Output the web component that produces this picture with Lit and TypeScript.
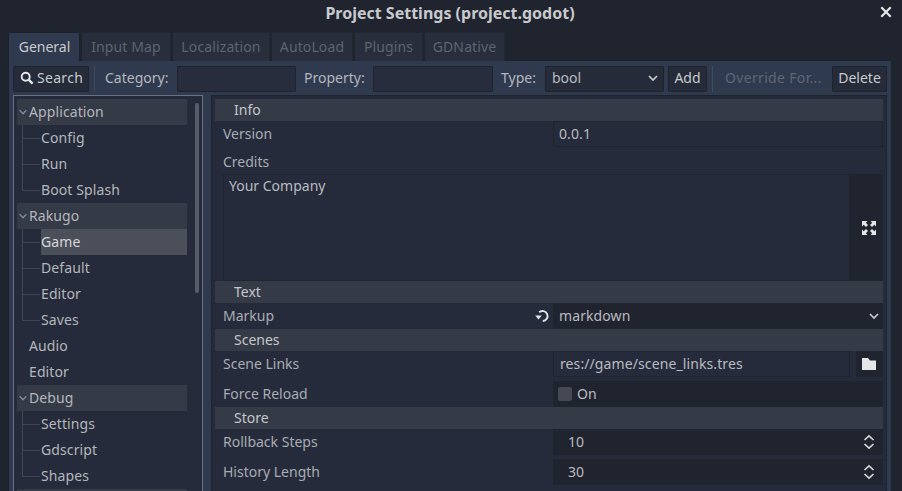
import { LitElement, html, css, svg } from 'lit';
import { customElement } from 'lit/decorators.js';

const chevron = (size = 12) => html`<svg class="chev" width=${size} height=${size} viewBox="0 0 12 12"><path d="M2 4l4 4 4-4" fill="none" stroke="currentColor" stroke-width="1.7"/></svg>`;
const updown = html`<svg class="updown" width="12" height="16" viewBox="0 0 12 16"><path d="M1.5 6L6 1.8 10.5 6M1.5 10L6 14.2 10.5 10" fill="none" stroke="#d8d9dc" stroke-width="1.6"/></svg>`;

type TreeRow = { label: string; kind: 'head' | 'plain' | 'child' | 'last'; selected?: boolean };

const tree: TreeRow[] = [
  { label: 'Application', kind: 'head' },
  { label: 'Config', kind: 'child' },
  { label: 'Run', kind: 'child' },
  { label: 'Boot Splash', kind: 'last' },
  { label: 'Rakugo', kind: 'head' },
  { label: 'Game', kind: 'child', selected: true },
  { label: 'Default', kind: 'child' },
  { label: 'Editor', kind: 'child' },
  { label: 'Saves', kind: 'last' },
  { label: 'Audio', kind: 'plain' },
  { label: 'Editor', kind: 'plain' },
  { label: 'Debug', kind: 'head' },
  { label: 'Settings', kind: 'child' },
  { label: 'Gdscript', kind: 'child' },
  { label: 'Shapes', kind: 'last' },
  { label: '', kind: 'head' },
];

const tabs = ['General', 'Input Map', 'Localization', 'AutoLoad', 'Plugins', 'GDNative'];

@customElement('app-root')
export class AppRoot extends LitElement {
  private renderTree() {
    return tree.map(
      (r) => html`
        <div class="row ${r.kind} ${r.selected ? 'selected' : ''}">
          ${r.kind === 'head' && r.label ? chevron(10) : ''}
          <span class="row-label">${r.label}</span>
        </div>
      `,
    );
  }

  private renderToolbar() {
    return html`
      <div class="toolbar">
        <button class="btn search">
          <svg width="14" height="14" viewBox="0 0 14 14"><circle cx="5.7" cy="5.7" r="4" fill="none" stroke="#e4e5e7" stroke-width="1.9"/><path d="M8.6 8.6l4 4" stroke="#e4e5e7" stroke-width="2.4"/></svg>
          Search
        </button>
        <div class="sep"></div>
        <span class="tl cat">Category:</span>
        <div class="field w-cat"></div>
        <span class="tl prop">Property:</span>
        <div class="field w-prop"></div>
        <span class="tl type">Type:</span>
        <div class="btn select">bool ${chevron()}</div>
        <button class="btn add">Add</button>
        <div class="sep sep2"></div>
        <span class="override">Override For...</span>
        <button class="btn del">Delete</button>
      </div>
    `;
  }

  private renderInspector() {
    return html`
      <div class="section">Info</div>
      <div class="prop-row">
        <span class="plabel">Version</span>
        <div class="value boxed">0.0.1</div>
      </div>
      <div class="credits-label">Credits</div>
      <div class="credits">
        <div class="text-area">Your Company</div>
        <div class="expand">
          <svg width="14" height="14" viewBox="0 0 14 14" fill="#e4e5e7">
            <path d="M0 0h5.5L3.8 1.7 6 4 4 6 1.7 3.8 0 5.5zM14 0v5.5l-1.7-1.7L10 6 8 4l2.2-2.3L8.5 0zM0 14V8.5l1.7 1.7L4 8l2 2-2.2 2.3L5.5 14zM14 14H8.5l1.7-1.7L8 10l2-2 2.3 2.2L14 8.5z"/>
          </svg>
        </div>
      </div>
      <div class="section">Text</div>
      <div class="prop-row">
        <span class="plabel">Markup</span>
        <svg class="revert" width="16" height="16" viewBox="0 0 16 16">
          ${svg`<path d="M5.2 4.3A5 5 0 1 1 8.8 13" fill="none" stroke="#e4e5e7" stroke-width="1.9"/><path d="M1.2 7.6h6.6L4.5 11.6z" fill="#e4e5e7"/>`}
        </svg>
        <div class="value dark">markdown ${chevron()}</div>
      </div>
      <div class="section">Scenes</div>
      <div class="prop-row">
        <span class="plabel">Scene Links</span>
        <div class="value path">
          <div class="path-input">res://game/scene_links.tres</div>
          <div class="path-btn">
            <svg width="14" height="12" viewBox="0 0 14 12"><path d="M0 0h6l2 2.5h6V12H0z" fill="#e4e5e7"/></svg>
          </div>
        </div>
      </div>
      <div class="prop-row reload">
        <span class="plabel">Force Reload</span>
        <div class="value dark check"><span class="box"></span>On</div>
      </div>
      <div class="section">Store</div>
      <div class="prop-row">
        <span class="plabel">Rollback Steps</span>
        <div class="value dark num">10 ${updown}</div>
      </div>
      <div class="prop-row reload">
        <span class="plabel">History Length</span>
        <div class="value dark num">30 ${updown}</div>
      </div>
    `;
  }

  render() {
    return html`
      <div class="title">
        <span>Project Settings (project.godot)</span>
        <svg class="close" width="12" height="12" viewBox="0 0 12 12"><path d="M1.3 1.3l9.4 9.4M10.7 1.3l-9.4 9.4" stroke="#e8e9eb" stroke-width="2.1"/></svg>
      </div>
      <div class="tabs">
        ${tabs.map((t, i) => html`<div class="tab ${i === 0 ? 'active' : ''}">${t}</div>`)}
      </div>
      <div class="panel">
        ${this.renderToolbar()}
        <div class="split">
          <div class="tree">
            <div class="rows">${this.renderTree()}</div>
            <div class="track"><div class="thumb"></div></div>
          </div>
          <div class="inspector">${this.renderInspector()}</div>
        </div>
      </div>
    `;
  }

  static styles = css`
    :host {
      display: block;
      width: 902px;
      height: 491px;
      overflow: hidden;
      box-sizing: border-box;
      padding-left: 8px;
      background: #20242f;
      color: #e0e0e0;
      font-family: 'Noto Sans', sans-serif;
      font-size: 14px;
      line-height: 20px;
    }
    * {
      box-sizing: border-box;
    }
    button {
      font: inherit;
      color: inherit;
      padding: 0;
    }
    .title {
      position: relative;
      height: 32px;
      padding: 3px 2px 0 0;
      margin-left: -8px;
      text-align: center;
      font-weight: 700;
      font-size: 16px;
      color: #c8cacd;
      line-height: 21px;
    }
    .close {
      position: absolute;
      left: 880px;
      top: 6px;
    }
    .tabs {
      display: grid;
      grid-template-columns: 72px 89px 97px 81px 68px 80px;
      justify-content: start;
      height: 28px;
      gap: 2px;
    }
    .tab {
      padding-top: 4px;
      text-align: center;
      letter-spacing: 0.12px;
      background: #282e3c;
      color: #5f6470;
      border-top: 1px solid #222733;
      border-right: 1px solid #222733;
    }
    .tab.active {
      position: relative;
      z-index: 1;
      height: 29px;
      padding-left: 1px;
      letter-spacing: 0;
      background: #2f3a4f;
      color: #c8cacd;
      border-left: 1px solid #1d212b;
      border-top-color: #1d212b;
      border-right-color: #1d212b;
    }
    .panel {
      width: 884px;
      height: 431px;
      background: #2f3a4f;
      border: 1px solid #1d212b;
      border-bottom: 0;
      padding: 4px 4px 0;
    }
    .toolbar {
      display: flex;
      align-items: center;
      height: 27px;
      color: #b4b7bc;
    }
    .btn {
      display: flex;
      align-items: center;
      height: 26px;
      padding-bottom: 2px;
      background: #252b39;
      border: 1px solid #1e232e;
      border-radius: 1px;
      color: #c8cacd;
    }
    .search {
      width: 76px;
      padding-left: 6px;
      gap: 3px;
      letter-spacing: 0.3px;
    }
    .sep {
      width: 1px;
      height: 26px;
      margin: 0 10px 0 5px;
      background: #414b5e;
    }
    .tl {
      padding-bottom: 2px;
      color: #b4b7bc;
    }
    .cat {
      width: 72px;
    }
    .prop {
      width: 69px;
      margin-left: 8px;
    }
    .type {
      width: 44px;
      margin-left: 8px;
    }
    .field {
      height: 26px;
      background: #272d3c;
      border: 1px solid #1e232e;
      border-radius: 1px;
    }
    .w-cat {
      width: 119px;
    }
    .w-prop {
      width: 120px;
    }
    .select {
      width: 119px;
      padding: 0 4px 2px 6px;
      justify-content: space-between;
      color: #b9bbc0;
    }
    .add {
      width: 39px;
      margin-left: 4px;
      justify-content: center;
    }
    .sep2 {
      margin: 0 12px 0 5px;
    }
    .override {
      width: 107px;
      padding-bottom: 2px;
      letter-spacing: 0.33px;
      color: #5f6675;
    }
    .del {
      width: 55px;
      justify-content: center;
    }
    .chev {
      color: #c8cacd;
    }
    .split {
      display: flex;
      gap: 8px;
      margin-top: 3px;
    }
    .tree {
      display: flex;
      width: 190px;
      height: 420px;
      padding: 3px;
      background: #252b3a;
      border: 1px solid #6b7180;
    }
    .rows {
      width: 170px;
      flex: none;
      color: #b4b7bc;
      letter-spacing: 0.1px;
    }
    .row {
      position: relative;
      height: 26px;
      line-height: 26px;
      padding-left: 12px;
      display: flex;
      align-items: center;
    }
    .row.head {
      background: #353a47;
      padding-left: 0;
    }
    .row.head .chev {
      width: 12px;
      height: 10px;
      color: #858a94;
    }
    .row.child,
    .row.last {
      padding-left: 24px;
    }
    .row.child::before,
    .row.last::before {
      content: '';
      position: absolute;
      left: 5px;
      top: 0;
      bottom: 0;
      width: 1px;
      background: #414653;
    }
    .row.last::before {
      bottom: 13px;
    }
    .row.child::after,
    .row.last::after {
      content: '';
      position: absolute;
      left: 5px;
      top: 13px;
      width: 18px;
      height: 1px;
      background: #414653;
    }
    .row.selected .row-label {
      align-self: stretch;
      flex: 1;
      background: #4b4f59;
      color: #d6d7da;
    }
    .track {
      width: 4px;
      margin: 4px 0 0 8px;
    }
    .thumb {
      width: 4px;
      height: 190px;
      border-radius: 2px;
      background: #585c66;
    }
    .inspector {
      width: 676px;
      height: 420px;
      padding: 3px;
      background: #252b3a;
      border: 1px solid #1e232e;
      border-bottom: 0;
      color: #a9acb3;
    }
    .section {
      height: 22px;
      line-height: 21px;
      padding-left: 19px;
      background: #353a47;
      color: #c4c6ca;
    }
    .prop-row {
      display: flex;
      align-items: center;
      height: 26px;
      padding-left: 8px;
    }
    .prop-row.reload {
      height: 30px;
      padding-top: 4px;
    }
    .plabel {
      flex: 1;
      padding-bottom: 1px;
    }
    .revert {
      margin-right: 3px;
    }
    .value {
      display: flex;
      align-items: center;
      justify-content: space-between;
      width: 330px;
      height: 26px;
      padding: 0 3px 1px 6px;
      color: #b9bbc0;
      letter-spacing: 0.1px;
    }
    .boxed {
      padding-left: 5px;
      background: #252b3a;
      border: 1px solid #20242f;
      justify-content: flex-start;
    }
    .dark {
      background: #20242f;
    }
    .num {
      padding: 0 8px 1px 15px;
    }
    .check {
      justify-content: flex-start;
      padding-left: 5px;
      gap: 5px;
    }
    .box {
      width: 14px;
      height: 14px;
      margin-top: 1px;
      border-radius: 2px;
      background: #454952;
    }
    .path {
      padding: 0;
    }
    .path-input {
      width: 297px;
      height: 26px;
      padding-left: 6px;
      line-height: 23px;
      background: #252b3a;
      border: 1px solid #20242f;
    }
    .path-btn {
      display: flex;
      align-items: center;
      justify-content: center;
      width: 27px;
      height: 26px;
      padding-right: 1px;
      background: #20242f;
    }
    .credits-label {
      height: 27px;
      padding: 5px 0 0 8px;
    }
    .credits {
      display: flex;
      height: 107px;
      margin-left: 8px;
    }
    .text-area {
      flex: 1;
      padding: 1px 5px;
      background: #252b3a;
      border: 1px solid #20242f;
      color: #b9bbc0;
    }
    .expand {
      display: flex;
      align-items: center;
      justify-content: center;
      width: 33px;
      padding-left: 4px;
      background: #20242f;
    }
  `;
}

declare global {
  interface HTMLElementTagNameMap {
    'app-root': AppRoot;
  }
}
